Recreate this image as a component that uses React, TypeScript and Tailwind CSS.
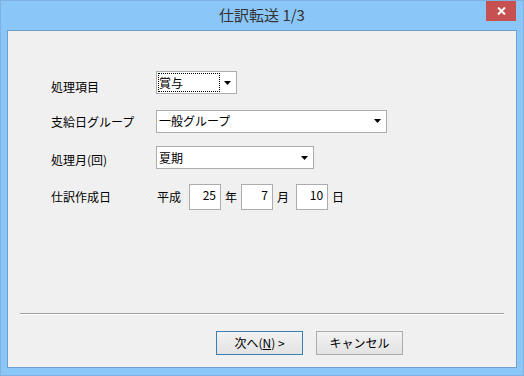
import { useState } from 'react';

const font = { fontFamily: '"Noto Sans CJK JP", "Noto Sans", sans-serif' };

function Arrow() {
	return (
		<svg width="7" height="4" viewBox="0 0 7 4" className="shrink-0">
			<path d="M0 0H7L3.5 4Z" fill="#000" />
		</svg>
	);
}

function Combo({ value, width, focused }: { value: string; width: string; focused?: boolean }) {
	return (
		<div className={`${width} h-[23px] flex items-center bg-white border border-[#acacac] pl-[1px] pr-[1px]`}>
			<div
				className={`flex-1 h-[19px] flex items-center leading-none ${
					focused ? 'border border-dotted border-black' : 'border border-transparent'
				}`}
			>
				{value}
			</div>
			<div className="w-[15px] flex justify-center">
				<Arrow />
			</div>
		</div>
	);
}

function NumBox({ value }: { value: string }) {
	return (
		<div className="w-[32px] h-[26px] bg-white border border-[#acacac] flex items-start justify-end pr-[4px] pt-[4px] leading-none">
			{value}
		</div>
	);
}

export default function App() {
	const [step] = useState(1);

	return (
		<div
			className="w-[524px] h-[376px] bg-[#8bc6f8] border border-[#7fb2e0] flex flex-col text-[12px] text-black"
			style={font}
		>
			{/* title bar */}
			<div className="h-[29px] relative flex items-center justify-center">
				<span className="text-[15px] text-[#333] mt-[-1px]">仕訳転送 {step}/3</span>
				<div className="absolute right-[7px] top-0 w-[30px] h-[20px] bg-[#c75050] flex items-center justify-center">
					<svg width="9" height="8" viewBox="0 0 9 8">
						<path d="M1 0.5L8 7.5M8 0.5L1 7.5" stroke="#fff" strokeWidth="2" />
					</svg>
				</div>
			</div>

			{/* client */}
			<div className="mx-[6px] h-[338px] bg-[#f0f0f0] border border-[#6d9fcf] flex flex-col">
				<div className="pl-[43px] pt-[40px] flex flex-col">
					<div className="h-[23px] flex items-center">
						<span className="w-[105px] mt-[8px]">処理項目</span>
						<Combo value="賞与" width="w-[81px]" focused />
					</div>
					<div className="h-[24px] mt-[15px] flex items-center">
						<span className="w-[105px] mt-[2px]">支給日グループ</span>
						<Combo value="一般グループ" width="w-[231px]" />
					</div>
					<div className="h-[23px] mt-[13px] flex items-center">
						<span className="w-[105px] mt-[5px]">処理月(回)</span>
						<Combo value="夏期" width="w-[158px]" />
					</div>
					<div className="h-[26px] mt-[15px] flex items-center">
						<span className="w-[106px]">仕訳作成日</span>
						<span>平成</span>
						<div className="ml-[8px]">
							<NumBox value="25" />
						</div>
						<span className="ml-[4px]">年</span>
						<div className="ml-[4px]">
							<NumBox value="7" />
						</div>
						<span className="ml-[4px]">月</span>
						<div className="ml-[7px]">
							<NumBox value="10" />
						</div>
						<span className="ml-[4px]">日</span>
					</div>
				</div>

				<div className="mt-auto mx-[12px] border-t border-[#a0a0a0] border-b border-b-white" />

				<div className="flex gap-[13px] pt-[16px] pb-[12px] pl-[208px]">
					<button
						type="button"
						className="w-[87px] h-[24px] border border-[#3c7fb1] bg-gradient-to-b from-[#f2f2f2] to-[#e3e3e3] flex items-center justify-center leading-none"
					>
						次へ(<span className="underline">N</span>) &gt;
					</button>
					<button
						type="button"
						className="w-[87px] h-[24px] border border-[#acacac] bg-gradient-to-b from-[#f2f2f2] to-[#e3e3e3] flex items-center justify-center leading-none"
					>
						キャンセル
					</button>
				</div>
			</div>
		</div>
	);
}
